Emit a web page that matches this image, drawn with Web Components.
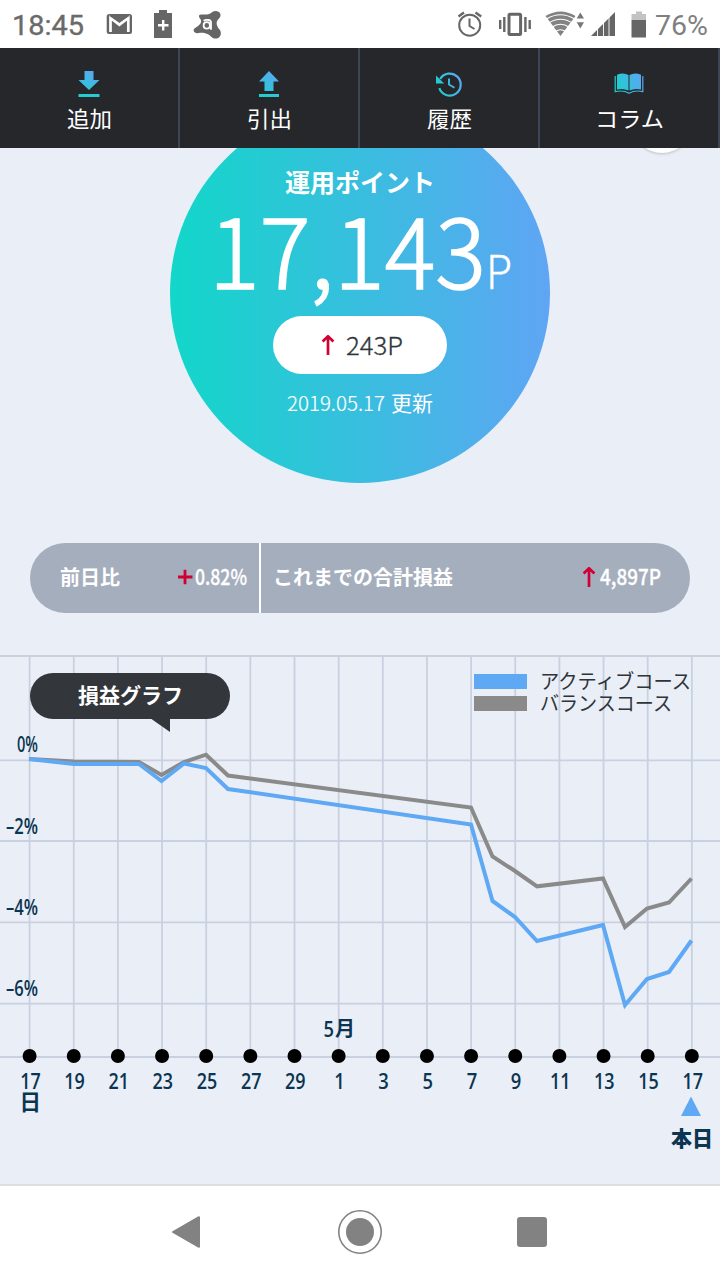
<!DOCTYPE html>
<html lang="ja">
<head>
<meta charset="utf-8">
<title>ポイント運用</title>
<style>
html,body{margin:0;padding:0}
body{width:720px;height:1280px;overflow:hidden;background:#eaeff7;font-family:"Noto Sans CJK JP",sans-serif}
</style>
</head>
<body>
<point-app></point-app>
<script>
const define = (name, html, setup) => customElements.define(name, class extends HTMLElement {
  connectedCallback() {
    if (this.shadowRoot) return;
    const root = this.attachShadow({mode: 'open'});
    const t = document.createElement('template');
    t.innerHTML = typeof html === 'function' ? html(this) : html;
    root.append(t.content.cloneNode(true));
    if (setup) setup(this, root);
  }
});

/* One line of text set to an exact measure; the box is the em box. */
define('fit-text', el => {
  const a = n => el.getAttribute(n);
  const s = +a('size'), w = +a('w');
  const face = a('face') || (/[0-9P]/.test(a('text')) ? '"Noto Sans CJK JP"' : '"Liberation Sans"');
  return `<style>:host{display:block;flex:none;width:${w}px;height:${s}px}svg{display:block;overflow:visible}
  text{font-family:${face},"Noto Sans CJK JP",sans-serif;font-size:${s}px;font-weight:${a('weight') || 400};fill:currentColor;stroke:currentColor;stroke-width:${a('bolder') || 0}}</style>
  <svg width="${w}" height="${s}"><text y="${s * .88}" textLength="${w}" lengthAdjust="spacingAndGlyphs">${a('text')}</text></svg>`;
});

define('up-arrow', `<style>:host{display:block;flex:none;width:14px;height:20px}svg{display:block}</style>
<svg width="14" height="20" viewBox="0 0 14 20" fill="none" stroke="#cf0032" stroke-width="2.7"><path d="M7 20V1M1.600 6.400L7 1.300L12.400 6.400"/></svg>`);

const glyphs = {
  mail: ['106 13 27 22', `<rect x="106.7" y="14" width="25.3" height="20" rx="2.5" fill="#666"/><path d="M110.500 32V18L119.400 24.700L128.300 18V32" fill="none" stroke="#fff" stroke-width="2.700"/><path d="M109.500 16H129.300L119.400 22.500Z" fill="#666"/>`],
  charge: ['154 10 18 28', `<path d="M154 13H159V10H167V13H172V38H154Z" fill="#666"/><path d="M158 25.300H168.500M163.200 20V30.500" stroke="#fff" stroke-width="2.400"/>`],
  avast: ['193 9 29 29', `<path d="M199.500 14C203 12.500 207 15 211 12C213 10 216 9.300 219 11C221.500 13 220.600 16.500 218.500 18C215.500 21 216.300 25 219.500 28.500C222 31.500 221 36.500 217 37.500C212.500 38.200 211 35 208.500 33.500C205 31.500 201.500 31.300 198.500 32C194.500 33 192.800 30 194 28C195.500 26 198.500 25.500 200.500 22.500C201.700 20 201 18.500 199.600 17C199 16 198.600 14.600 199.500 14Z" fill="#666"/><circle cx="206.800" cy="24.400" r="3.200" fill="none" stroke="#fff" stroke-width="1.800"/><path d="M203.600 19.800C205.500 18.600 211 18.200 211 21.500V28.800" fill="none" stroke="#fff" stroke-width="1.800"/>`],
  alarm: ['457 11 26 27', `<g fill="none" stroke="#666" stroke-width="2"><circle cx="469.700" cy="25.200" r="10.500"/><path d="M469.500 18.500V26L474.500 29"/><path d="M458.500 16.500L464 12.600M475.500 12.600L481.200 16.500" stroke-width="2.400"/></g>`],
  vibrate: ['498 12 34 25', `<rect x="509" y="14.200" width="11.600" height="20.200" rx="1" fill="none" stroke="#666" stroke-width="3"/><path d="M500.200 20V29M504.300 17V32M525.400 17V32M529.700 20V29" stroke="#666" stroke-width="2.400"/>`],
  wifi: ['545 11 40 26', `<path d="M545.500 16Q560.500 7 575.500 16L560.500 36Z" fill="#828282"/><g fill="none" stroke="#fff" stroke-width="1.100"><path d="M546 19.300Q560.500 10.300 575 19.300M548 23.500Q560.500 15 573 23.500M551.500 27.500Q560.500 21 569.500 27.500M555.500 31.500Q560.500 28 565.500 31.500"/></g><path d="M580.300 12.500L584 18.500H576.700ZM580.300 28.500L584 22.300H576.700Z" fill="#777"/>`],
  signal: ['591 12 24 24', `<path d="M591 36L615 12V36Z" fill="#666"/><path d="M597.500 28V37M603.500 22V37M609 16V37" stroke="#fff" stroke-width=".9"/>`],
  battery: ['631 10 15 27', `<path d="M631.500 13H636V10.500H642V13H646V19H631.500Z" fill="#c3c3c3"/><path d="M631.500 19H646V36.500H631.500Z" fill="#666"/>`]
};
define('status-glyph', el => {
  const [box, body] = glyphs[el.getAttribute('name')], [, , w, h] = box.split(' ');
  return `<style>:host{display:block;flex:none}svg{display:block}</style><svg width="${w}" height="${h}" viewBox="${box}">${body}</svg>`;
});

define('status-bar', `<style>
:host{display:flex;height:48px;background:#fff;align-items:center;box-sizing:border-box;padding:0 12px 0 12px}
.space{flex:1}
status-glyph,fit-text{margin-left:var(--g,0)}
</style>
<fit-text text="18:45" w="72" size="28" face="Roboto" bolder=".35" style="color:#6a6a6a"></fit-text>
<status-glyph name="mail" style="--g:22px"></status-glyph>
<status-glyph name="charge" style="--g:21px"></status-glyph>
<status-glyph name="avast" style="--g:21px"></status-glyph>
<span class="space"></span>
<status-glyph name="alarm"></status-glyph>
<status-glyph name="vibrate" style="--g:15px"></status-glyph>
<status-glyph name="wifi" style="--g:13px"></status-glyph>
<status-glyph name="signal" style="--g:6px"></status-glyph>
<status-glyph name="battery" style="--g:16px"></status-glyph>
<fit-text text="76%" w="53" size="28" face="Roboto" style="--g:9px;color:#808080"></fit-text>`);

const navIcons = {
  add: `<path d="M10.500 1H19.500V10H25.500L15 20L4.500 10H10.500ZM4.500 24H25.500V27H4.500Z" fill="url(#v)"/>`,
  out: `<path d="M10.500 21H19.500V11.500H25L15 1L5 11.500H10.500ZM5 24H25V27H5Z" fill="url(#v)"/>`,
  history: `<path d="M6.200 9A11 11 0 1 1 5.300 18.200" fill="none" stroke="url(#h)" stroke-width="2.200"/><path d="M2 5.500L10.200 13.500H2Z" fill="url(#h)"/><path d="M15 8.600V14.500L20.500 17.700" fill="none" stroke="url(#h)" stroke-width="1.900"/>`,
  book: `<path d="M3 4.800Q9 2 14.500 5V20.500Q8.500 17.800 3 19.600ZM15.500 5Q21 2 27 4.800V19.600Q21.500 17.800 15.500 20.500Z" fill="url(#h)"/><path d="M1.200 6V21.600Q9 19.800 15 23.200Q21 19.800 28.800 21.600V6" fill="none" stroke="url(#h)" stroke-width="1.200"/>`
};
define('nav-item', el => `<style>
:host{display:flex;flex-direction:column;align-items:center;box-sizing:border-box;border-right:2px solid #3b4656;background:#26272b;color:#fff;padding-top:22px}
svg{display:block;margin-bottom:10px}</style>
<svg width="30" height="28" viewBox="0 0 30 28"><defs>
<linearGradient id="v" gradientUnits="userSpaceOnUse" x1="7" y1="27" x2="20" y2="3"><stop stop-color="#1dd2cc"/><stop offset="1" stop-color="#58a9f0"/></linearGradient>
<linearGradient id="h" gradientUnits="userSpaceOnUse" x1="2" y1="18" x2="27" y2="9"><stop stop-color="#1bd0cd"/><stop offset="1" stop-color="#59a8f1"/></linearGradient></defs>${navIcons[el.getAttribute('icon')]}</svg>
<fit-text text="${el.getAttribute('label')}" w="${el.getAttribute('w')}" size="22"></fit-text>`);
define('top-nav', `<style>:host{display:grid;grid-template-columns:repeat(4,1fr);height:100px;position:relative;z-index:2}</style>
<nav-item icon="add" label="追加" w="45"></nav-item><nav-item icon="out" label="引出" w="45"></nav-item>
<nav-item icon="history" label="履歴" w="45"></nav-item><nav-item icon="book" label="コラム" w="69"></nav-item>`);

define('point-summary', `<style>
:host{display:flex;justify-content:center;height:395px;overflow:hidden;position:relative}
.disc{box-sizing:border-box;width:380px;height:380px;margin-top:-45px;padding-top:67px;border-radius:50%;background:linear-gradient(90deg,#12d7c9,#5fa5f4);color:#fff;display:flex;flex-direction:column;align-items:center}
.value{display:flex;align-items:flex-end;margin-top:9px;height:97px}
.value fit-text+fit-text{margin:0 0 6px 0}
.change{box-sizing:border-box;display:flex;align-items:center;width:174px;height:58px;border-radius:29px;background:#fff;color:#2f3439;margin-top:15px;padding-left:48px}
.change fit-text{margin:0 0 0 11px}
.date{display:flex;margin-top:19px}
.date fit-text+fit-text{margin-left:6px}
.float{position:absolute;left:632px;top:-55px;width:60px;height:60px;border-radius:50%;background:#fff;box-shadow:0 1px 3px #0003}
</style>
<div class="disc">
<fit-text text="運用ポイント" w="150" size="25" weight="700"></fit-text>
<div class="value"><fit-text text="17,143" w="277" size="96" weight="300" bolder="1.6"></fit-text><fit-text text="P" w="26" size="46" weight="300" bolder=".4"></fit-text></div>
<div class="change"><up-arrow></up-arrow><fit-text text="243P" w="57" size="25" weight="300" bolder=".3"></fit-text></div>
<div class="date"><fit-text text="2019.05.17" w="98" size="20.500" weight="300" bolder=".2"></fit-text><fit-text text="更新" w="42" size="21"></fit-text></div>
</div><div class="float"></div>`);

define('rate-bar', `<style>
:host{display:flex;height:70px;margin:0 30px;border-radius:35px;background:#a5aebd;color:#fff;overflow:hidden}
div{display:flex;align-items:center;justify-content:space-between;box-sizing:border-box}
.day{width:229px;padding:0 12px 2px 30px}
.total{flex:1;border-left:2px solid #fff;padding:0 29px 2px 12px}
span{display:flex;align-items:center}
svg{display:block;margin-right:2px}
up-arrow{margin-right:4px}
</style>
<div class="day"><fit-text text="前日比" w="60" size="20" weight="700"></fit-text><span><svg width="16" height="16"><path d="M1 8H15.500M8 .7V15.300" stroke="#cf0032" stroke-width="2.800"/></svg><fit-text text="0.82%" w="52" size="22" weight="500" bolder=".3"></fit-text></span></div>
<div class="total"><fit-text text="これまでの合計損益" w="180" size="20" weight="700"></fit-text><span><up-arrow></up-arrow><fit-text text="4,897P" w="61" size="22" weight="500" bolder=".3"></fit-text></span></div>`);

define('chart-title', `<style>
:host{display:flex;justify-content:center;box-sizing:border-box;width:200px;height:46px;border-radius:23px;background:#33363a;color:#fff;padding-top:12px}
:host::after{content:"";position:absolute;left:120px;top:45px;width:20px;height:14px;background:#33363a;clip-path:polygon(0 0,100% 0,100% 100%)}
</style><fit-text text="損益グラフ" w="105" size="21" weight="700"></fit-text>`);
define('chart-legend', `<style>
:host{display:grid;grid-template-columns:53px auto;column-gap:13px;row-gap:0;color:#2f3439}
i{height:15px;margin-top:4px}.a{background:#5ea8f4}.b{background:#8a8a8a}
fit-text{margin:1px 0}
</style><i class="a"></i><fit-text text="アクティブコース" w="151" size="20"></fit-text><i class="b"></i><fit-text text="バランスコース" w="132" size="20"></fit-text>`);

const days = [17,19,21,23,25,27,29,1,3,5,7,9,11,13,15,17];
const active = '29,759 74,764 139,764 161.5,781 184,763.5 206,768 228,789 471,824.500 492.500,901 515,917 537,941 603,925 625,1005 647,979 669,972 691.500,940.500';
const balance = '29,759 74,761.500 139,762 161.500,775 184,762 206,754.700 228,775.500 471,807.500 492.500,856.500 515,871 537,886.300 603,878.500 625,927 647,908.500 669,902.500 691.500,878.500';
define('profit-chart', `<style>
:host{display:block;position:relative;height:529px}
svg{display:block;font-family:"Open Sans","Noto Sans CJK JP",sans-serif;font-weight:700;fill:#0b3551}
chart-title{position:absolute;left:30px;top:18px}
chart-legend{position:absolute;left:474px;top:15px}
.cjk{font-family:"Liberation Sans","Noto Sans CJK JP",sans-serif}
.num{font-family:"Noto Sans CJK JP",sans-serif;font-weight:500;stroke:#0b3551;stroke-width:.35}
</style>
<svg width="720" height="529" viewBox="0 655 720 529"></svg>
<chart-title></chart-title><chart-legend></chart-legend>`, (el, root) => {
  const x = i => 29.6 + i * 44.15;
  let s = '<g stroke="#c9d0df" stroke-width="1.8">';
  for (const y of [656, 760.3, 841, 922.3, 1003.6, 1057]) s += `<path d="M0 ${y}H720"/>`;
  days.forEach((d, i) => s += `<path d="M${x(i)} 656V1057"/>`);
  s += '</g>';
  [['0%',17,752],['–2%',6,833.500],['–4%',6,914.500],['–6%',6,996]].forEach(([t, tx, ty]) => {
    s += `<text x="${tx}" y="${ty}" font-size="21" font-weight="600" textLength="${38 - tx}" lengthAdjust="spacingAndGlyphs">${t}</text>`;
  });
  days.forEach((d, i) => {
    const w = d > 9 ? 20.5 : 10.5;
    s += `<circle cx="${x(i)}" cy="1056" r="7" fill="#000"/><text x="${x(i) + .8 - w / 2}" y="1088.500" font-size="22" font-weight="600" textLength="${w}" lengthAdjust="spacingAndGlyphs">${d}</text>`;
  });
  s += `<text x="323.500" y="1036.500" font-size="21" font-weight="600" textLength="10.500" lengthAdjust="spacingAndGlyphs">5</text>
  <text class="cjk" x="335" y="1036" font-size="20">月</text>
  <text class="cjk" x="19.500" y="1110" font-size="21.500">日</text>
  <path d="M691 1096.500L701 1116H681Z" fill="#5ea8f4"/>
  <text class="cjk" x="671" y="1145.500" font-size="21" font-weight="900" textLength="42">本日</text>
  <polyline points="${balance}" fill="none" stroke="#8a8a8a" stroke-width="4"/>
  <polyline points="${active}" fill="none" stroke="#5ea8f4" stroke-width="4"/>`;
  root.querySelector('svg').innerHTML = s;
});

define('system-nav', `<style>
:host{display:flex;align-items:center;box-sizing:border-box;height:96px;border-top:2px solid #dedfe0;background:#fff;padding:0 171px 2px}
svg{display:block}svg+svg{margin-left:136px}svg+svg+svg{margin-left:134px}
</style>
<svg width="30" height="34" viewBox="0 0 30 34"><path d="M2 17L28 2.200V31.800Z" fill="#828282" stroke="#828282" stroke-width="2" stroke-linejoin="round"/></svg>
<svg width="46" height="46" viewBox="0 0 46 46"><circle cx="23" cy="23" r="21.200" fill="none" stroke="#828282" stroke-width="1.600"/><circle cx="23" cy="23" r="14" fill="#828282"/></svg>
<svg width="30" height="30"><rect width="30" height="30" rx="3" fill="#828282"/></svg>`);

define('point-app', `<style>:host{display:flex;flex-direction:column;width:720px;height:1280px;background:#eaeff7}profit-chart{margin-top:42px}</style>
<status-bar></status-bar><top-nav></top-nav><point-summary></point-summary><rate-bar></rate-bar><profit-chart></profit-chart><system-nav></system-nav>`);
</script>
</body>
</html>
